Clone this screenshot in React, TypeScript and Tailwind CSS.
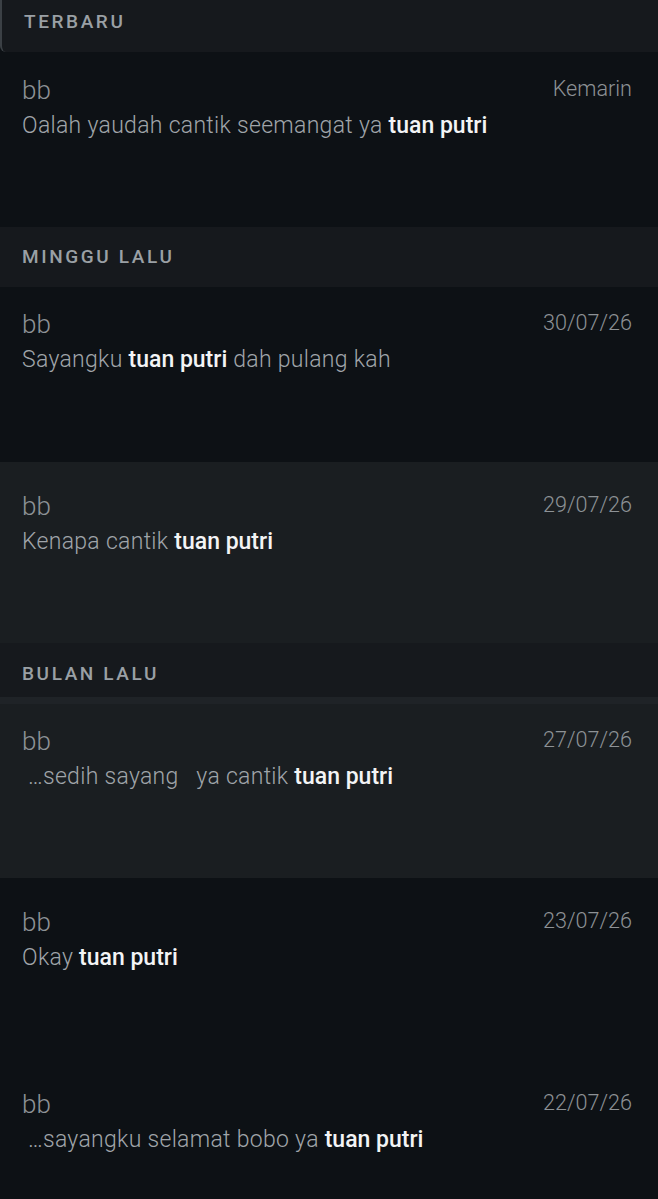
import React from "react";

type Chat = {
  name: string;
  date: string;
  pre: string;
  tail?: string;
  light?: boolean;
  box: string;
};

type Section = {
  title: string;
  box: string;
  strip?: boolean;
  chats: Chat[];
};

const sections: Section[] = [
  {
    title: "TERBARU",
    box: "h-[52px] pt-[11px] border-l-2 border-[#3b4045] rounded-bl-md",
    chats: [
      {
        name: "bb",
        date: "Kemarin",
        pre: "Oalah yaudah cantik seemangat ya ",
        box: "h-[175px] pt-[23px]",
      },
    ],
  },
  {
    title: "MINGGU LALU",
    box: "h-[60px] pt-[19px]",
    chats: [
      {
        name: "bb",
        date: "30/07/26",
        pre: "Sayangku ",
        tail: " dah pulang kah",
        box: "h-[175px] pt-[22px]",
      },
      {
        name: "bb",
        date: "29/07/26",
        pre: "Kenapa cantik ",
        light: true,
        box: "h-[181px] pt-[29px]",
      },
    ],
  },
  {
    title: "BULAN LALU",
    box: "h-[54px] pt-[20px]",
    strip: true,
    chats: [
      {
        name: "bb",
        date: "27/07/26",
        pre: " …sedih sayang   ya cantik ",
        light: true,
        box: "h-[174px] pt-[22px]",
      },
      {
        name: "bb",
        date: "23/07/26",
        pre: "Okay ",
        box: "h-[181px] pt-[29px]",
      },
      {
        name: "bb",
        date: "22/07/26",
        pre: " …sayangku selamat bobo ya ",
        box: "h-[181px] pt-[30px]",
      },
    ],
  },
];

const ChatRow = ({ chat }: { chat: Chat }) => (
  <div className={`${chat.box} px-[22px] ${chat.light ? "bg-[#1a1e21]" : "bg-[#0d1115]"}`}>
    <div className="flex items-start justify-between">
      <span className="text-[26px] leading-[30px] font-light text-[#8d9296]">{chat.name}</span>
      <span className="text-[21.6px] leading-[28px] font-light text-[#8d9296] pr-[4px]">{chat.date}</span>
    </div>
    <p className="mt-[7px] text-[23px] leading-[28px] font-light tracking-[0.3px] text-[#a0a5aa] whitespace-pre">
      {chat.pre}
      <span className="font-medium tracking-normal text-[#f3f4f5]">tuan putri</span>
      {chat.tail}
    </p>
  </div>
);

export default function App() {
  return (
    <div className="w-[658px] h-[1199px] overflow-hidden bg-[#0d1115] font-['Roboto',sans-serif]">
      {sections.map((section) => (
        <div key={section.title}>
          <div className={`${section.box} bg-[#16191d] px-[22px]`}>
            <span className="text-[19px] leading-[22px] font-medium tracking-[2.6px] text-[#9aa0a5]">
              {section.title}
            </span>
          </div>
          {section.strip && <div className="h-[7px] bg-[#1f2327]" />}
          {section.chats.map((chat) => (
            <ChatRow key={chat.date} chat={chat} />
          ))}
        </div>
      ))}
    </div>
  );
}
